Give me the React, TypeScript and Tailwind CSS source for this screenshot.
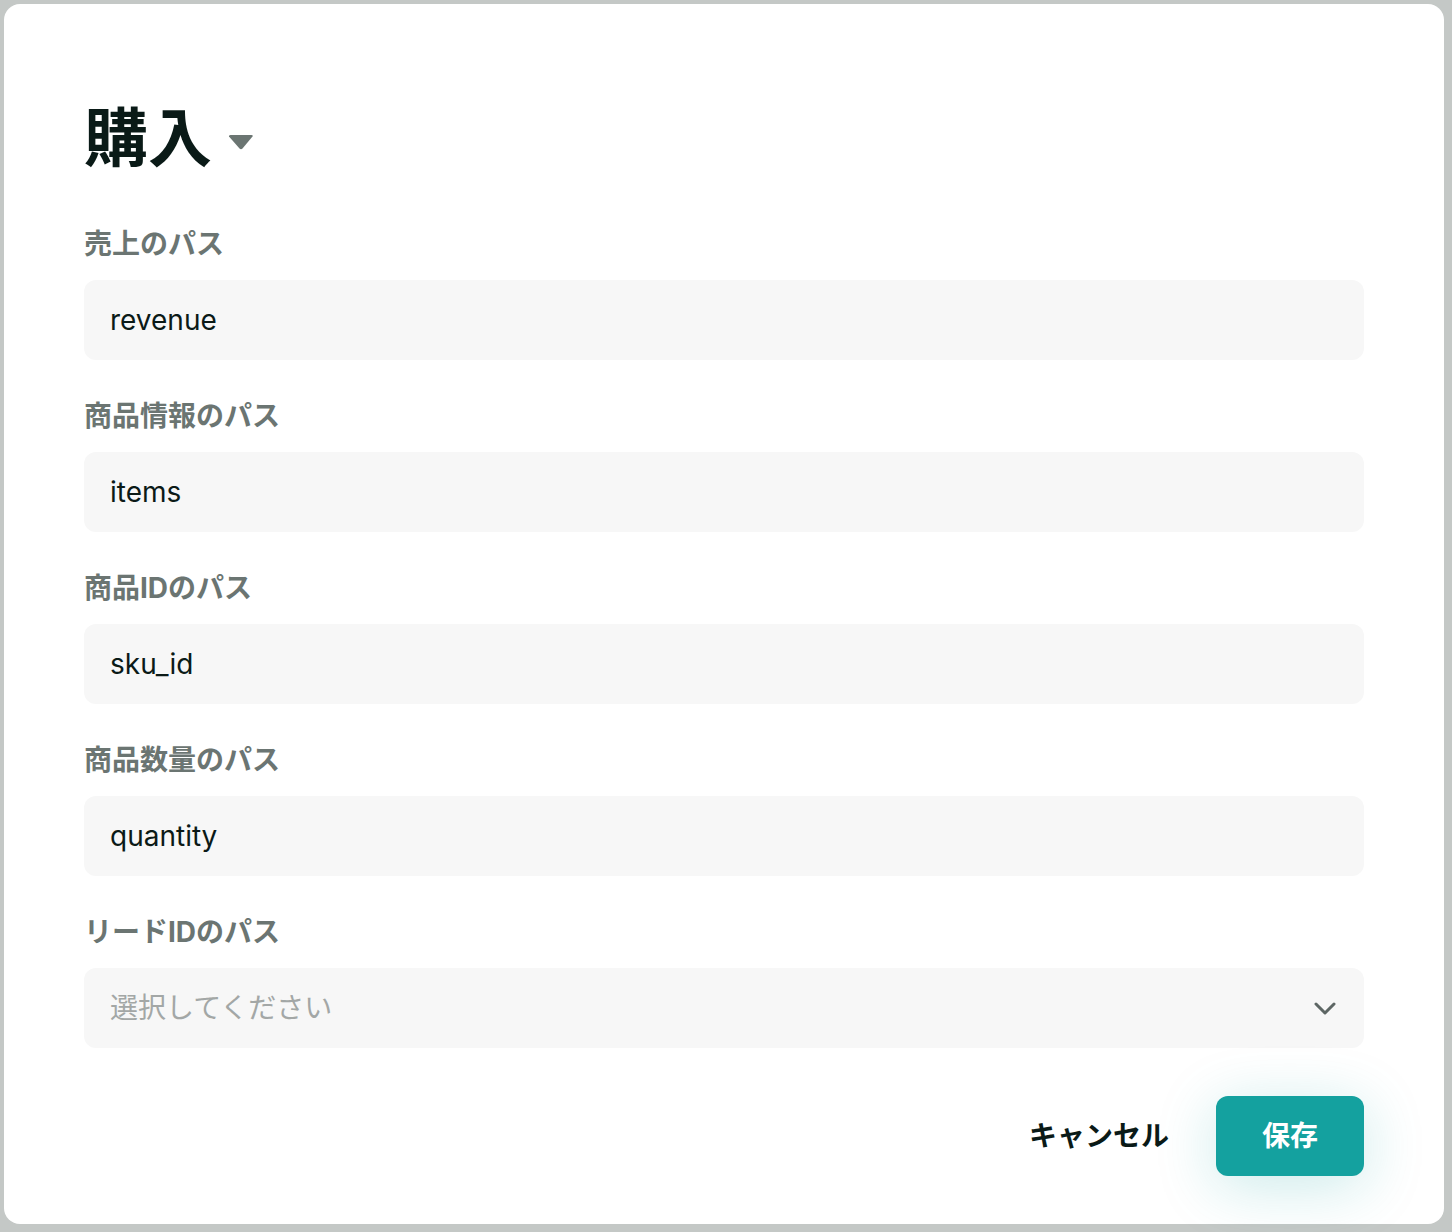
const fields = [
  { label: '売上のパス', value: 'revenue' },
  { label: '商品情報のパス', value: 'items' },
  { label: '商品IDのパス', value: 'sku_id' },
  { label: '商品数量のパス', value: 'quantity' },
];

const font = "font-['Inter','Noto_Sans_CJK_JP',sans-serif]";

export default function App() {
  return (
    <div className={`min-h-[1232px] bg-[#c4c8c6] pb-2 pl-1 pr-2 pt-1 ${font}`}>
      <div className="flex min-h-[1220px] flex-col rounded-2xl bg-white px-20 pb-12 pt-20">
        <div className="mb-9 flex h-[108px] items-center gap-4">
          <h1 className="text-[64px] font-bold leading-none text-[#0a1a17]">購入</h1>
          <svg width="26" height="15" viewBox="0 0 26 15" className="mt-2">
            <path d="M1 1.5 Q0.5 0 2.5 0 H23.5 Q25.5 0 24.5 1.5 L14.5 13.5 Q13 15 11.5 13.5 Z" fill="#6b7572" />
          </svg>
        </div>

        <div className="flex flex-col gap-10">
          {fields.map((f) => (
            <div key={f.label} className="flex flex-col gap-5">
              <label className="text-[28px] font-bold leading-8 text-[#6b7572]">{f.label}</label>
              <div className="flex h-20 items-center rounded-xl bg-[#f7f7f7] px-[26px] text-[28px] text-[#0b1a17]">
                {f.value}
              </div>
            </div>
          ))}
          <div className="flex flex-col gap-5">
            <label className="text-[28px] font-bold leading-8 text-[#6b7572]">リードIDのパス</label>
            <div className="flex h-20 items-center justify-between rounded-xl bg-[#f7f7f7] pl-[26px] pr-[28px] text-[28px] text-[#a3a7a6]">
              <span>選択してください</span>
              <svg width="22" height="13" viewBox="0 0 22 13" fill="none">
                <path d="M2 2 L11 11 L20 2" stroke="#5d6664" strokeWidth="3" strokeLinecap="round" strokeLinejoin="round" />
              </svg>
            </div>
          </div>
        </div>

        <div className="mt-12 flex items-center justify-end gap-[47px]">
          <button className="text-[28px] font-bold text-[#0a1a17]">キャンセル</button>
          <button className="flex h-20 w-[148px] items-center justify-center rounded-xl bg-[#14a19f] text-[28px] font-bold text-white shadow-[0_10px_60px_rgba(20,161,159,0.22)]">
            保存
          </button>
        </div>
      </div>
    </div>
  );
}
